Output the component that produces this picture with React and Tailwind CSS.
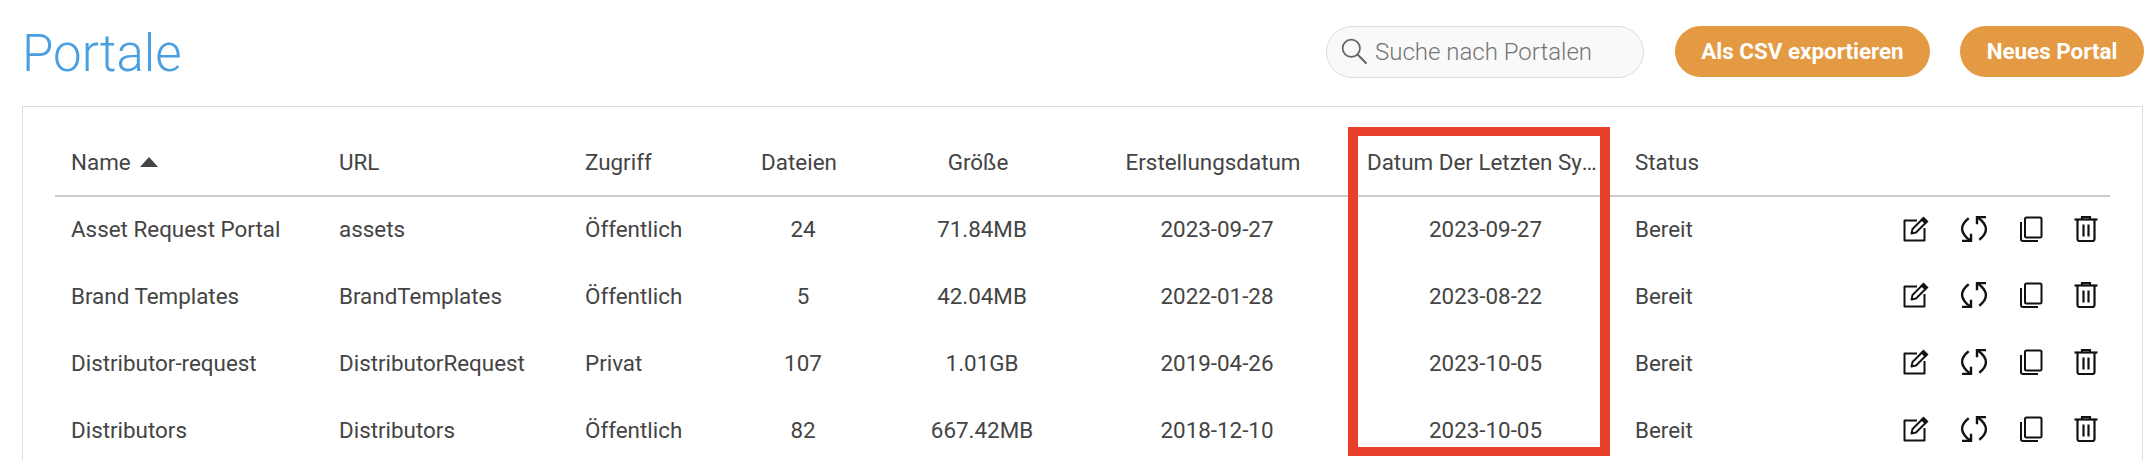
const rows = [
  ["Asset Request Portal", "assets", "Öffentlich", "24", "71.84MB", "2023-09-27", "2023-09-27"],
  ["Brand Templates", "BrandTemplates", "Öffentlich", "5", "42.04MB", "2022-01-28", "2023-08-22"],
  ["Distributor-request", "DistributorRequest", "Privat", "107", "1.01GB", "2019-04-26", "2023-10-05"],
  ["Distributors", "Distributors", "Öffentlich", "82", "667.42MB", "2018-12-10", "2023-10-05"],
];

const EditIcon = () => (
  <svg viewBox="0 0 26 26" className="w-[26px] h-[26px] shrink-0" fill="none" stroke="#111" strokeWidth="2">
    <path d="M14 4.5H1.5v20h20V12" strokeLinejoin="round" />
    <path d="M8.5 17.5l1-4.5L19 3.5l3.5 3.5-9.5 9.5z" strokeLinejoin="round" strokeWidth="1.9" />
    <path d="M20.5 0.5l5 5-3 3-5-5z" fill="#111" stroke="none" />
  </svg>
);
const SyncIcon = () => (
  <svg viewBox="0 0 28 26" className="w-[28px] h-[26px] shrink-0" fill="none" stroke="#111" strokeWidth="2.4">
    <path d="M8.7 2.3Q-5 13 9.7 24.3" />
    <path d="M2 25h9V17.7" />
    <path d="M19.3 23.7Q33 13 18.3 1.7" />
    <path d="M26 1H17v7.3" />
  </svg>
);
const CopyIcon = () => (
  <svg viewBox="0 0 24 26" className="w-[24px] h-[26px] shrink-0" fill="none" stroke="#111" strokeWidth="2">
    <rect x="6" y="1.5" width="16.5" height="20" rx="1.5" />
    <path d="M2 6v17a2 2 0 0 0 2 2h15" />
  </svg>
);
const TrashIcon = () => (
  <svg viewBox="0 0 24 26" className="w-[24px] h-[26px] shrink-0" fill="none" stroke="#111" strokeWidth="2.2">
    <path d="M0.5 3.5h23" />
    <path d="M8 3V1.2h8V3" />
    <path d="M3.5 3.5v19.5a2 2 0 0 0 2 2h13a2 2 0 0 0 2-2V3.5" />
    <path d="M9.5 8.5v12M14.5 8.5v12" />
  </svg>
);

const SearchIcon = () => (
  <svg viewBox="0 0 24 24" className="w-[26px] h-[26px] shrink-0 mb-[3px]" fill="none" stroke="#666" strokeWidth="1.6">
    <circle cx="9.5" cy="9.5" r="8" />
    <path d="M15.5 15.5L23 23" strokeLinecap="round" strokeWidth="1.9" />
  </svg>
);

export default function App() {
  return (
    <div className="relative w-[2154px] h-[460px] overflow-hidden bg-white text-[#444] font-['Roboto',sans-serif]">
      <header className="h-[106px] flex items-start justify-between pl-[22px] pr-[10px]">
        <h1 className="text-[51px] leading-[61px] pt-[23px] font-light text-[#4a9fe0]">Portale</h1>
        <div className="flex items-start pt-[26px]">
          <label className="w-[318px] h-[52px] rounded-[26px] border border-[#dddddd] bg-[#f9f9f9] flex items-center gap-[8px] pl-[14px] mr-[31px]">
            <SearchIcon />
            <span className="text-[24px] text-[#757575] font-light">Suche nach Portalen</span>
          </label>
          <button className="h-[51px] w-[255px] rounded-[26px] bg-[#e39a42] text-white font-bold text-[22.4px] mr-[30px]">Als CSV exportieren</button>
          <button className="h-[51px] w-[184px] rounded-[26px] bg-[#e39a42] text-white font-bold text-[22.4px]">Neues Portal</button>
        </div>
      </header>
      <main className="ml-[22px] mr-[11px] h-[400px] border border-[#dddddd] pl-[32px] pr-[32px] pt-[23px]">
        <table className="w-[2055px] table-fixed border-collapse text-[22.4px]">
          <colgroup>
            <col className="w-[268px]" />
            <col className="w-[246px]" />
            <col className="w-[155px]" />
            <col className="w-[158px]" />
            <col className="w-[200px]" />
            <col className="w-[270px]" />
            <col className="w-[267px]" />
            <col className="w-[200px]" />
            <col />
          </colgroup>
          <thead>
            <tr className="h-[66px] border-b-2 border-[#cccccc]">
              <th className="font-normal text-left pl-[16px]">
                <span className="inline-flex items-center gap-[9px]">Name
                  <svg viewBox="0 0 18 10" className="w-[18px] h-[10px]"><path d="M9 0l9 10H0z" fill="#444" /></svg>
                </span>
              </th>
              <th className="font-normal text-left pl-[16px]">URL</th>
              <th className="font-normal text-left pl-[16px]">Zugriff</th>
              <th className="font-normal text-center pr-[8px]">Dateien</th>
              <th className="font-normal text-center pr-[8px]">Größe</th>
              <th className="font-normal text-center pr-[8px]">Erstellungsdatum</th>
              <th className="font-normal text-left pl-[15px] pr-[22px] overflow-hidden whitespace-nowrap text-ellipsis">Datum Der Letzten Synchronisierung</th>
              <th className="font-normal text-left pl-[16px]">Status</th>
              <th />
            </tr>
          </thead>
          <tbody>
            {rows.map((r) => (
              <tr key={r[0]} className="h-[67px]">
                <td className="pl-[16px] whitespace-nowrap">{r[0]}</td>
                <td className="pl-[16px] whitespace-nowrap">{r[1]}</td>
                <td className="pl-[16px]">{r[2]}</td>
                <td className="text-center">{r[3]}</td>
                <td className="text-center">{r[4]}</td>
                <td className="text-center">{r[5]}</td>
                <td className="text-center">{r[6]}</td>
                <td className="pl-[16px]">Bereit</td>
                <td>
                  <div className="flex items-center justify-end gap-[31px] pr-[12px] mb-[3px]">
                    <EditIcon />
                    <SyncIcon />
                    <CopyIcon />
                    <TrashIcon />
                  </div>
                </td>
              </tr>
            ))}
          </tbody>
        </table>
      </main>
      <div className="absolute left-[1348px] top-[127px] w-[262px] h-[329px] border-x-[10px] border-y-[9px] border-[#e8402a]" />
    </div>
  );
}
